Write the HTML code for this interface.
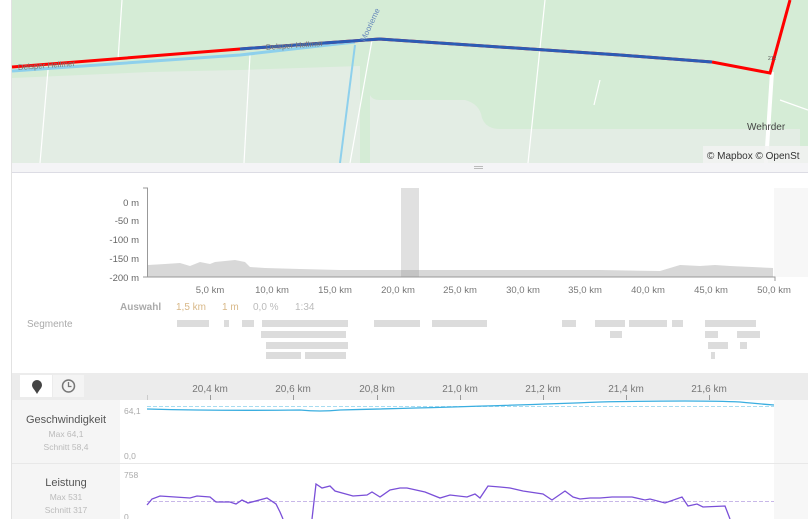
<!DOCTYPE html>
<html><head><meta charset="utf-8"><style>
html,body{margin:0;padding:0;width:808px;height:519px;overflow:hidden;background:#fff;font-family:"Liberation Sans",sans-serif}
svg{display:block}
</style></head><body>
<svg width="808" height="519" viewBox="0 0 808 519" xmlns="http://www.w3.org/2000/svg" font-family="Liberation Sans, sans-serif">
<rect x="0" y="0" width="11" height="519" fill="#fff"/>
<line x1="11.5" y1="0" x2="11.5" y2="519" stroke="#e2e2e2"/>
<!-- map -->
<rect x="12" y="0" width="796" height="163" fill="#d5ecd6"/>
<path d="M12 78 L150 72 L240 70 L360 66 L360 163 L12 163Z" fill="#e3ede4"/>
<path d="M370 72 L370 95 Q372 100 380 100 L465 100 Q480 104 482 118 Q486 129 500 129 L800 129 L800 163 L370 163Z" fill="#e3ede4"/>
<g stroke="#fff" stroke-width="1.2" fill="none">
<path d="M122 0 L118 60"/><path d="M48 70 L40 163"/><path d="M250 55 L244 163"/>
<path d="M372 40 L350 163"/><path d="M545 0 L528 163"/><path d="M600 80 L594 105"/>
<path d="M780 100 L808 110"/>
</g>
<path d="M772 72 L766 163" stroke="#fff" stroke-width="4"/>
<path d="M12 71 L240 55 L355 42" stroke="#8ed0ec" stroke-width="3" fill="none"/>
<path d="M355 45 L340 163" stroke="#8ed0ec" stroke-width="2" fill="none"/>
<path d="M12 67 L240 49 L380 39 L620 55 L712 62" stroke="#ff0000" stroke-width="3" fill="none"/>
<path d="M240 49 L380 39 L620 55 L712 62" stroke="#2b5cb5" stroke-width="3" fill="none"/>
<path d="M712 62 L770 73 L790 0" stroke="#ff0000" stroke-width="3" fill="none"/>
<text x="18" y="70" font-size="8" fill="#777" transform="rotate(-4 18 70)">Delsper Hellmer</text>
<text x="266" y="50" font-size="8" fill="#777" transform="rotate(-4 266 50)">Delsper Hellmer</text>
<text x="365" y="42" font-size="8" fill="#6688bb" transform="rotate(-65 365 42)">Moorieme</text>
<text x="747" y="130" font-size="10" fill="#444">Wehrder</text>
<text x="768" y="60" font-size="5" fill="#555">212</text>
<rect x="703" y="146" width="105" height="17" fill="#f2f2f2" opacity="0.85"/>
<text x="707" y="159" font-size="10" fill="#333">© Mapbox © OpenSt</text>
<!-- divider -->
<rect x="12" y="163" width="796" height="9" fill="#f4f4f6"/>
<line x1="12" y1="172.5" x2="808" y2="172.5" stroke="#dcdce4"/>
<rect x="474" y="166" width="9" height="1" fill="#bbb"/><rect x="474" y="168" width="9" height="1" fill="#bbb"/>
<!-- elevation chart -->
<rect x="774" y="188" width="34" height="89" fill="#f7f7f7"/>
<g fill="#666" font-size="9.5" text-anchor="end">
<text x="139" y="206">0 m</text><text x="139" y="224">-50 m</text><text x="139" y="243">-100 m</text><text x="139" y="262">-150 m</text><text x="139" y="281">-200 m</text>
</g>
<rect x="401" y="188" width="18" height="89" fill="#e0e0e0"/>
<path d="M148 277 L148 265 L165 264 L180 263 L190 266 L200 262 L210 264 L215 262 L225 261 L235 260 L245 262 L250 267 L265 268 L300 269 L340 270 L400 270 L420 270 L500 270 L600 270 L660 271 L680 265 L700 266 L715 265 L730 266 L773 268 L773 277Z" fill="#d8d8d8"/>
<rect x="401" y="270" width="18" height="7" fill="#c4c4c4"/>
<path d="M143 188 L147.5 188 L147.5 277 L775 277 L775 281" stroke="#999" fill="none"/>
<line x1="143" y1="277" x2="147" y2="277" stroke="#999"/>
<g fill="#777" font-size="9.5" text-anchor="middle">
<text x="210" y="293">5,0 km</text><text x="272" y="293">10,0 km</text><text x="335" y="293">15,0 km</text><text x="398" y="293">20,0 km</text>
<text x="460" y="293">25,0 km</text><text x="523" y="293">30,0 km</text><text x="585" y="293">35,0 km</text><text x="648" y="293">40,0 km</text>
<text x="711" y="293">45,0 km</text><text x="774" y="293">50,0 km</text>
</g>
<text x="120" y="310" font-size="10" fill="#aaa" font-weight="bold">Auswahl</text>
<text x="176" y="310" font-size="10" fill="#d8b888">1,5 km</text>
<text x="222" y="310" font-size="10" fill="#d8b888">1 m</text>
<text x="253" y="310" font-size="10" fill="#bbb">0,0 %</text>
<text x="295" y="310" font-size="10" fill="#bbb">1:34</text>
<text x="27" y="327" font-size="10" fill="#aaa">Segmente</text>
<g fill="#dcdcdc">
<rect x="177" y="320" width="32" height="7"/><rect x="224" y="320" width="5" height="7"/><rect x="242" y="320" width="12" height="7"/><rect x="262" y="320" width="86" height="7"/>
<rect x="374" y="320" width="46" height="7"/><rect x="432" y="320" width="55" height="7"/><rect x="562" y="320" width="14" height="7"/><rect x="595" y="320" width="30" height="7"/>
<rect x="629" y="320" width="38" height="7"/><rect x="672" y="320" width="11" height="7"/><rect x="705" y="320" width="51" height="7"/>
<rect x="261" y="331" width="85" height="7"/><rect x="610" y="331" width="12" height="7"/><rect x="705" y="331" width="13" height="7"/><rect x="737" y="331" width="23" height="7"/>
<rect x="266" y="342" width="82" height="7"/><rect x="708" y="342" width="20" height="7"/><rect x="740" y="342" width="7" height="7"/>
<rect x="266" y="352" width="35" height="7"/><rect x="305" y="352" width="41" height="7"/><rect x="711" y="352" width="4" height="7"/>
</g>
<!-- bottom toolbar -->
<rect x="12" y="373" width="796" height="27" fill="#ececec"/>
<rect x="20" y="375" width="32" height="22" fill="#fff"/>
<rect x="53" y="375" width="31" height="22" fill="#f4f4f4"/>
<path d="M37 380 a5 5 0 0 1 5 5 c0 3 -3 5 -5 9 c-2 -4 -5 -6 -5 -9 a5 5 0 0 1 5 -5z" fill="#444"/>
<circle cx="68.5" cy="386" r="6" fill="none" stroke="#777" stroke-width="1.5"/>
<path d="M68.5 382 V386.5 H71.5" stroke="#777" stroke-width="1.3" fill="none"/>
<g fill="#777" font-size="10" text-anchor="middle">
<text x="210" y="392">20,4 km</text><text x="293" y="392">20,6 km</text><text x="377" y="392">20,8 km</text><text x="460" y="392">21,0 km</text>
<text x="543" y="392">21,2 km</text><text x="626" y="392">21,4 km</text><text x="709" y="392">21,6 km</text>
</g>
<g stroke="#999"><line x1="210.5" y1="395" x2="210.5" y2="400"/><line x1="293.5" y1="395" x2="293.5" y2="400"/><line x1="377.5" y1="395" x2="377.5" y2="400"/><line x1="460.5" y1="395" x2="460.5" y2="400"/><line x1="543.5" y1="395" x2="543.5" y2="400"/><line x1="626.5" y1="395" x2="626.5" y2="400"/><line x1="709.5" y1="395" x2="709.5" y2="400"/></g>
<line x1="147.5" y1="395" x2="147.5" y2="400" stroke="#ccc"/>
<!-- rows -->
<rect x="12" y="400" width="108" height="119" fill="#f5f5f5"/>
<rect x="774" y="400" width="34" height="119" fill="#f7f7f7"/>
<line x1="12" y1="463.5" x2="808" y2="463.5" stroke="#e8e8e8"/>
<text x="66" y="423" font-size="11" fill="#555" text-anchor="middle">Geschwindigkeit</text>
<text x="66" y="437" font-size="8.5" fill="#bbb" text-anchor="middle">Max 64,1</text>
<text x="66" y="450" font-size="8.5" fill="#bbb" text-anchor="middle">Schnitt 58,4</text>
<text x="124" y="414" font-size="8.5" fill="#aaa">64,1</text>
<text x="124" y="459" font-size="8.5" fill="#aaa">0,0</text>
<line x1="147" y1="406.5" x2="774" y2="406.5" stroke="#a8dcf0" stroke-dasharray="4,2"/>
<path d="M147 409 Q220 411 300 410 Q320 412 340 410 Q500 406 600 402 Q700 400 740 402 Q760 404 774 405" stroke="#3aaee0" stroke-width="1.3" fill="none"/>
<text x="66" y="486" font-size="11" fill="#555" text-anchor="middle">Leistung</text>
<text x="66" y="500" font-size="8.5" fill="#bbb" text-anchor="middle">Max 531</text>
<text x="66" y="513" font-size="8.5" fill="#bbb" text-anchor="middle">Schnitt 317</text>
<text x="124" y="478" font-size="8.5" fill="#aaa">758</text>
<text x="124" y="520" font-size="8.5" fill="#aaa">0</text>
<line x1="147" y1="501.5" x2="774" y2="501.5" stroke="#c8b8e8" stroke-dasharray="4,2"/>
<path d="M147 505 L152 499 L160 496 L190 498 L197 496 L210 497 L216 502 L230 502 L236 504 L242 500 L248 503 L267 498 L276 504 L280 512 L283 519 M312 519 L316 484 L322 488 L330 486 L335 491 L353 496 L367 495 L372 492 L380 497 L390 490 L400 488 L407 488 L425 492 L440 498 L450 495 L467 497 L475 494 L480 498 L488 486 L500 487 L510 488 L523 491 L543 494 L552 500 L565 491 L573 497 L580 499 L590 498 L600 498 L612 497 L632 497 L645 500 L650 499 L665 503 L682 497 L688 506 L697 504 L703 507 L725 506 L730 519" stroke="#7a4fd8" stroke-width="1.3" fill="none"/>
</svg>
</body></html>
